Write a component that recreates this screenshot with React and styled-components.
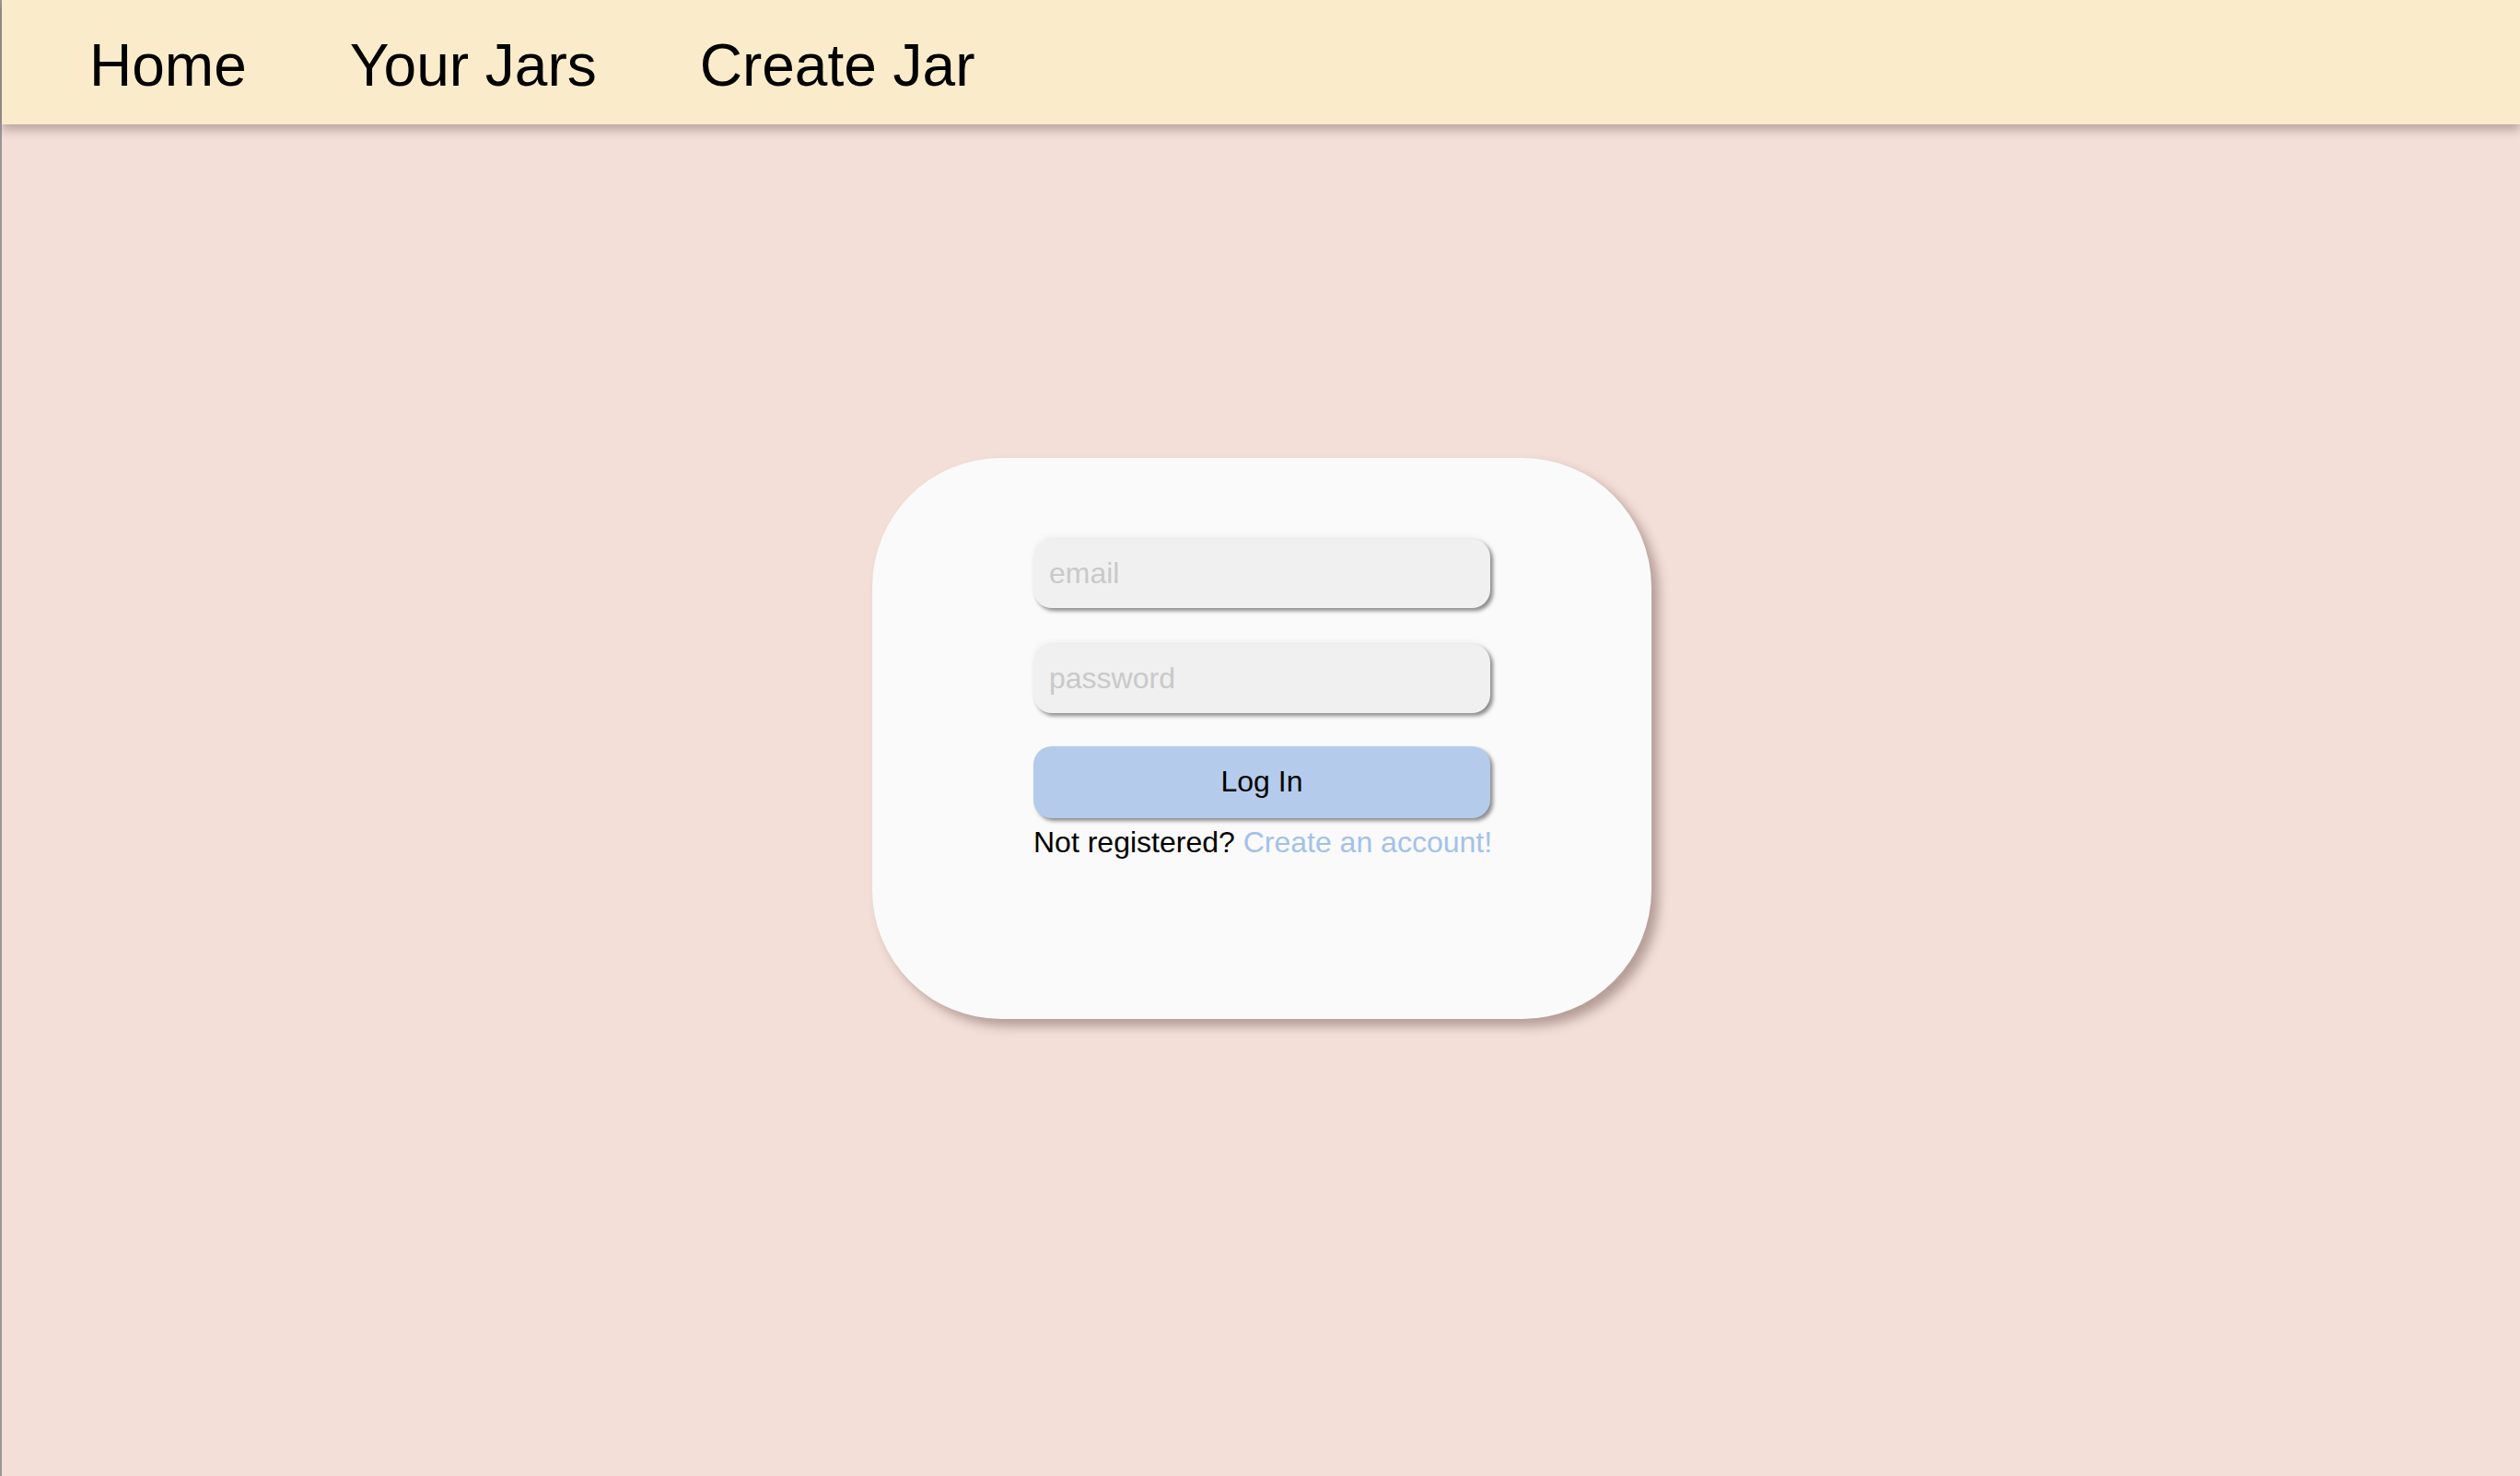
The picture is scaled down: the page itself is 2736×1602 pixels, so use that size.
import React from 'react'
import styled, { createGlobalStyle } from 'styled-components'

const GlobalStyle = createGlobalStyle`
  html, body {
    margin: 0;
    padding: 0;
    background: #f3ded8;
    font-family: "Liberation Sans", Arial, sans-serif;
  }
  * {
    box-sizing: border-box;
  }
`

const Page = styled.div`
  min-height: 100vh;
  border-left: 2px solid #9b9797;
  background: #f3ded8;
  display: flex;
  flex-direction: column;
`

const NavBar = styled.nav`
  display: flex;
  align-items: center;
  height: 135px;
  padding: 7px 0 0 39px;
  background: #faecca;
  box-shadow: 0 6px 10px rgba(80, 60, 50, 0.35);
  position: relative;
  z-index: 1;
`

const NavLink = styled.a`
  padding: 0 56px;
  font-size: 64px;
  color: #000;
  text-decoration: none;
  cursor: pointer;
`

const Main = styled.main`
  flex: 1;
  display: flex;
  align-items: center;
  justify-content: center;
  padding: 0 0 135px 2px;
`

const Card = styled.div`
  width: 846px;
  height: 609px;
  padding-top: 88px;
  background: #fafafa;
  border-radius: 140px;
  box-shadow: 8px 8px 12px rgba(90, 60, 55, 0.4);
  display: flex;
  flex-direction: column;
  align-items: center;
`

const Form = styled.form`
  width: 496px;
  display: flex;
  flex-direction: column;
`

const Field = styled.input`
  height: 75px;
  margin-bottom: ${({ $last }) => ($last ? '36px' : '39px')};
  padding: 0 17px;
  border: none;
  border-radius: 20px;
  background: #f0f0f0;
  font-family: inherit;
  font-size: 32px;
  color: #333;
  outline: none;
  box-shadow: 3px 3px 4px rgba(0, 0, 0, 0.45), 0 -3px 6px rgba(0, 0, 0, 0.04);

  &::placeholder {
    color: #c9c9c9;
  }
`

const Button = styled.button`
  height: 78px;
  border: none;
  border-radius: 20px;
  background: #b5cbeb;
  font-family: inherit;
  font-size: 32px;
  color: #000;
  cursor: pointer;
  box-shadow: 3px 3px 4px rgba(0, 0, 0, 0.45);
`

const Footnote = styled.p`
  margin: 8px 0 0;
  font-size: 32px;
  color: #000;
  white-space: nowrap;
`

const AccountLink = styled.a`
  color: #a3c1eb;
  text-decoration: none;
  cursor: pointer;
`

export default function App() {
  return (
    <>
      <GlobalStyle />
      <Page>
        <NavBar>
          <NavLink>Home</NavLink>
          <NavLink>Your Jars</NavLink>
          <NavLink>Create Jar</NavLink>
        </NavBar>
        <Main>
          <Card>
            <Form onSubmit={e => e.preventDefault()}>
              <Field type="email" placeholder="email" />
              <Field type="password" placeholder="password" $last />
              <Button type="submit">Log In</Button>
              <Footnote>
                Not registered? <AccountLink>Create an account!</AccountLink>
              </Footnote>
            </Form>
          </Card>
        </Main>
      </Page>
    </>
  )
}
